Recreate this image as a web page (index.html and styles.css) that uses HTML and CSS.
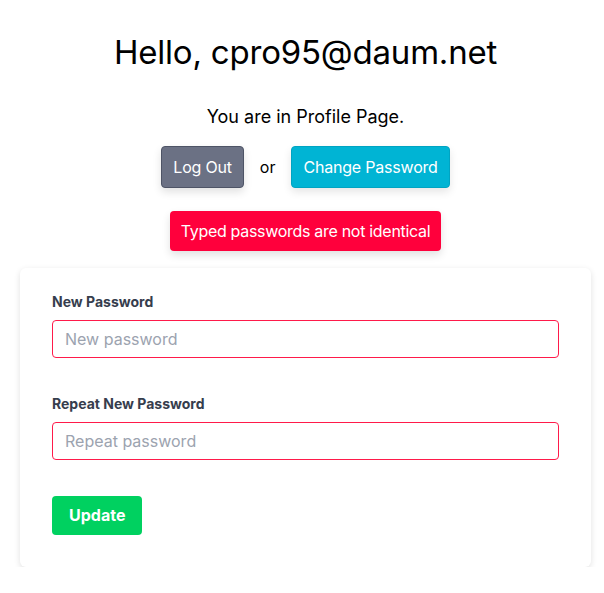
FILE: index.html
```html
<!DOCTYPE html>
<html lang="en">
<head>
    <meta charset="UTF-8">
    <meta name="viewport" content="width=device-width, initial-scale=1.0">
    <title>Profile</title>
    <link rel="stylesheet" href="styles.css">
</head>
<body>
    <div id="container">
        <h1 class="title">Hello, cpro95@daum.net</h1>
        <p class="subtitle">You are in Profile Page.</p>
        <div class="actions">
            <button type="button" class="btn btn-dark">Log Out</button>
            <span class="or">or</span>
            <button type="button" class="btn btn-info">Change Password</button>
        </div>
        <div class="notice">
            <span class="notice-box">Typed passwords are not identical</span>
        </div>
        <form class="card">
            <div class="field">
                <label for="password">New Password</label>
                <input type="password" id="password" class="input" placeholder="New password">
            </div>
            <div class="field">
                <label for="repeat">Repeat New Password</label>
                <input type="password" id="repeat" class="input" placeholder="Repeat password">
            </div>
            <button type="button" class="btn btn-success">Update</button>
        </form>
    </div>
</body>
</html>
```

FILE: styles.css
```css
body {
    margin: 0;
    font-family: Inter, "Liberation Sans", sans-serif;
    color: #000000;
    background-color: #ffffff;
}
#container {
    padding: 30px 0 0 7px;
}
.title {
    margin: 0;
    text-align: center;
    font-size: 33px;
    font-weight: 400;
    line-height: 44px;
    letter-spacing: -0.2px;
}
.subtitle {
    margin: 31px 0 0;
    text-align: center;
    font-size: 18px;
    line-height: 24px;
}
.actions {
    display: flex;
    justify-content: center;
    align-items: center;
    gap: 16px;
    margin-top: 17px;
}
.btn {
    font-family: inherit;
    font-size: 16px;
    line-height: 24px;
    letter-spacing: -0.2px;
    padding: 8px 11px;
    border: 1px solid transparent;
    border-radius: 4px;
    color: #ffffff;
    cursor: pointer;
}
.btn-dark {
    background-color: #6b7184;
    border-color: #4e5466;
    box-shadow: 0 4px 8px rgba(0, 0, 0, 0.12);
}
.btn-info {
    background-color: #00b4d4;
    border-color: #00a4c2;
    box-shadow: 0 4px 8px rgba(0, 0, 0, 0.1);
}
.or {
    font-size: 16px;
}
.notice {
    display: flex;
    justify-content: center;
    margin-top: 23px;
}
.notice-box {
    background-color: #ff003c;
    color: #ffffff;
    font-size: 16px;
    line-height: 24px;
    letter-spacing: -0.3px;
    padding: 8px 11px;
    border-radius: 4px;
    box-shadow: 0 4px 8px rgba(0, 0, 0, 0.12);
}
.card {
    width: 571px;
    box-sizing: border-box;
    margin: 17px 0 0 13px;
    padding: 24px 32px 32px;
    background-color: #ffffff;
    border-radius: 6px;
    box-shadow: 0 2px 6px rgba(0, 0, 0, 0.12);
}
.field {
    margin-bottom: 36px;
}
.field label {
    display: block;
    font-size: 14px;
    font-weight: 700;
    line-height: 20px;
    color: #363d4d;
    margin-bottom: 8px;
}
.input {
    display: block;
    width: 100%;
    box-sizing: border-box;
    height: 38px;
    padding: 0 12px;
    font-family: inherit;
    font-size: 16px;
    border: 1px solid #ff1a4a;
    border-radius: 4px;
    outline: none;
}
.input::placeholder {
    color: #9ca3af;
}
.btn-success {
    background-color: #00d160;
    font-weight: 700;
    letter-spacing: 0;
    line-height: 23px;
    padding: 7px 16px;
}
```
